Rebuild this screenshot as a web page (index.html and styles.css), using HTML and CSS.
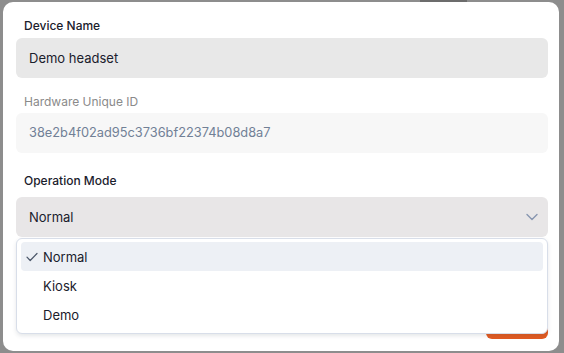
FILE: index.html
```html
<!DOCTYPE html>
<html lang="en">
<head>
    <meta charset="UTF-8">
    <meta name="viewport" content="width=device-width, initial-scale=1.0">
    <title>Edit Device</title>
    <link rel="stylesheet" href="styles.css">
</head>
<body>
    <div class="backdrop-tab"></div>

    <div class="modal">
        <div class="field">
            <label class="field-label">Device Name</label>
            <div class="input">Demo headset</div>
        </div>

        <div class="field field-muted">
            <label class="field-label">Hardware Unique ID</label>
            <div class="input input-readonly">38e2b4f02ad95c3736bf22374b08d8a7</div>
        </div>

        <div class="field field-select">
            <label class="field-label">Operation Mode</label>
            <div class="select">
                <span>Normal</span>
                <svg class="chevron" width="12" height="8" viewBox="0 0 12 8">
                    <path d="M1 1.5 L6 6.5 L11 1.5" fill="none" stroke="#8796b0" stroke-width="1.4" stroke-linecap="round" stroke-linejoin="round"/>
                </svg>
            </div>

            <ul class="menu">
                <li class="menu-item active">
                    <svg class="check" width="12" height="10" viewBox="0 0 12 10">
                        <path d="M1 5.2 L4.2 8.5 L11 1.5" fill="none" stroke="#4a5568" stroke-width="1.2" stroke-linecap="round" stroke-linejoin="round"/>
                    </svg>
                    Normal
                </li>
                <li class="menu-item">Kiosk</li>
                <li class="menu-item">Demo</li>
            </ul>
        </div>

        <div class="modal-footer">
            <button class="save-btn">Save</button>
        </div>
    </div>
</body>
</html>
```

FILE: styles.css
```css
body {
    margin: 0;
    padding: 2px 5px 2px 3px;
    background-color: #8d8d8d;
    font-family: Inter, "Noto Sans", sans-serif;
    color: #1a202c;
    position: relative;
    height: 349px;
    overflow: hidden;
}
.backdrop-tab {
    position: absolute;
    top: 0;
    left: 420px;
    width: 47px;
    height: 2px;
    background: #6c6c6c;
}
.modal {
    background: #fff;
    border-radius: 10px;
    padding: 16px 11px 12px 13px;
    height: 349px;
    box-sizing: border-box;
}
.field {
    margin-bottom: 16px;
}
.field-label {
    display: block;
    font-size: 12px;
    font-weight: 500;
    line-height: 16px;
    padding-left: 8px;
    margin-bottom: 4px;
}
.field-muted .field-label {
    color: #8a8a8a;
    font-weight: 400;
    margin-bottom: 3px;
}
.input {
    height: 40px;
    line-height: 40px;
    padding: 0 13px;
    background: #e8e8e8;
    border-radius: 6px;
    font-size: 13px;
}
.input-readonly {
    background: #f7f7f7;
    color: #718096;
    font-size: 12.8px;
}
.field-select {
    position: relative;
    margin-top: 20px;
    margin-bottom: 0;
}
.field-select .field-label {
    margin-bottom: 8px;
}
.select {
    height: 40px;
    padding: 0 13px;
    background: #e8e6e7;
    border-radius: 6px;
    font-size: 13px;
    display: flex;
    align-items: center;
    justify-content: space-between;
}
.chevron {
    margin-right: -3px;
}
.menu {
    position: absolute;
    top: 65px;
    left: 0;
    right: 0;
    margin: 0;
    padding: 3px 4px 4px;
    list-style: none;
    background: #fff;
    border: 1px solid #d8dee9;
    border-radius: 6px;
    box-shadow: 0 2px 4px rgba(45, 55, 72, 0.12);
    z-index: 2;
}
.menu-item {
    height: 29px;
    display: flex;
    align-items: center;
    padding-left: 22px;
    border-radius: 4px;
    font-size: 13px;
    position: relative;
}
.menu-item.active {
    background: #edf0f5;
}
.check {
    position: absolute;
    left: 5px;
    top: 10px;
}
.modal-footer {
    display: flex;
    justify-content: flex-end;
    margin-top: 62px;
}
.save-btn {
    width: 62px;
    height: 40px;
    border: none;
    border-radius: 6px;
    background: #e25b21;
    color: #fff;
    font-family: inherit;
    font-size: 13px;
    font-weight: 600;
}
```
